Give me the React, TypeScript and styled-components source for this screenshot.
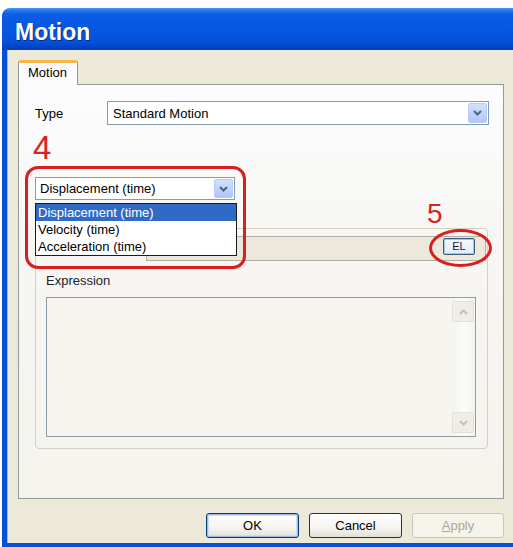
import React from 'react';
import styled, { createGlobalStyle } from 'styled-components';

const GlobalStyle = createGlobalStyle`
  html, body {
    margin: 0;
    padding: 0;
    background: #ffffff;
    overflow: hidden;
  }
  body {
    font-family: "Liberation Sans", Arial, sans-serif;
    font-size: 13px;
    color: #000000;
  }
`;

const Window = styled.div`
  margin: 8px 0 0 2px;
  width: 530px;
  display: flex;
  flex-direction: column;
`;

const TitleBar = styled.div`
  height: 42px;
  box-sizing: border-box;
  padding: 5px 0 0 13px;
  border-radius: 8px 8px 0 0;
  background: linear-gradient(
    180deg,
    #4a95f6 0%,
    #2274ef 7%,
    #0b5de4 15%,
    #0557e2 50%,
    #0452dc 80%,
    #0242c6 94%,
    #0a3aa6 100%
  );
  color: #ffffff;
  font: bold 23px/38px "Liberation Sans", Arial, sans-serif;
  text-shadow: 1px 1px 0 #0a2a8a;
`;

const Body = styled.div`
  background: #ece9d8;
  border-left: 5px solid #0650d8;
  border-bottom: 4px solid #0650d8;
  box-shadow: inset 1px 0 0 #9fb8ec;
  padding: 10px 0 5px 11px;
  display: flex;
  flex-direction: column;
`;

const TabStrip = styled.div`
  display: flex;
  margin-bottom: -1px;
  position: relative;
  z-index: 1;
`;

const Tab = styled.div`
  width: 60px;
  height: 25px;
  box-sizing: border-box;
  padding: 0 0 2px 9px;
  border: 1px solid #919b9c;
  border-top: 3px solid #f7b546;
  border-bottom: none;
  border-radius: 3px 3px 0 0;
  background: #fcfcfe;
  line-height: 20px;
`;

const Panel = styled.div`
  position: relative;
  width: 486px;
  height: 415px;
  box-sizing: border-box;
  border: 1px solid #919b9c;
  background: linear-gradient(180deg, #fcfcfe 0%, #f7f6f2 40%, #f4f3ee 100%);
  padding: 16px 14px 0 16px;
  display: flex;
  flex-direction: column;
`;

const FieldRow = styled.div`
  display: flex;
  align-items: center;
  height: 24px;
`;

const FieldLabel = styled.div`
  width: 72px;
`;

const Combo = styled.div<{ $height: number; $pad: number }>`
  flex: 1;
  height: ${p => p.$height}px;
  box-sizing: border-box;
  border: 1px solid #7f9db9;
  background: #ffffff;
  display: flex;
  align-items: center;
  justify-content: space-between;
  padding-left: ${p => p.$pad}px;
  padding-right: 1px;
`;

const ArrowButton = styled.div<{ $size: number }>`
  width: 19px;
  height: ${p => p.$size}px;
  box-sizing: border-box;
  border: 1px solid #b9cbf3;
  border-radius: 2px;
  background: linear-gradient(180deg, #d3e0fd 0%, #c1d3fb 50%, #b2c7f6 100%);
  display: flex;
  align-items: center;
  justify-content: center;
`;

const Chevron = ({ up = false, color = '#4d6185' }: { up?: boolean; color?: string }) => (
  <svg width="9" height="6" viewBox="0 0 9 6">
    <path
      d={up ? 'M1 5 L4.5 1.5 L8 5' : 'M1 1 L4.5 4.5 L8 1'}
      fill="none"
      stroke={color}
      strokeWidth="2"
    />
  </svg>
);

const ComboWrap = styled.div`
  position: relative;
  width: 200px;
  margin-top: 52px;
  display: flex;
`;

const DropList = styled.div`
  position: absolute;
  top: calc(100% + 3px);
  left: 0;
  width: 202px;
  box-sizing: border-box;
  border: 1px solid #1b1b1b;
  background: #ffffff;
  z-index: 3;
`;

const DropItem = styled.div<{ $selected?: boolean }>`
  height: 17px;
  line-height: 17px;
  padding-left: 2px;
  background: ${p => (p.$selected ? '#316ac5' : 'transparent')};
  color: ${p => (p.$selected ? '#ffffff' : '#000000')};
`;

const GroupBox = styled.div`
  margin-top: 28px;
  width: 453px;
  height: 221px;
  box-sizing: border-box;
  border: 1px solid #d3d0c2;
  border-radius: 4px;
  padding: 7px 1px 0 1px;
  display: flex;
  flex-direction: column;
`;

const LinkBar = styled.div`
  margin-left: 109px;
  height: 25px;
  box-sizing: border-box;
  border: 1px solid #b0aea3;
  background: #ece9dc;
  display: flex;
  justify-content: flex-end;
  align-items: flex-start;
  padding: 1px 10px 0 0;
`;

const SmallButton = styled.div`
  width: 32px;
  height: 17px;
  box-sizing: border-box;
  border: 1px solid #3c5a80;
  border-radius: 2px;
  background: linear-gradient(180deg, #f4f8ff 0%, #e2ebfa 100%);
  box-shadow: inset 0 0 0 1px #a9c3ec;
  font-size: 11px;
  line-height: 15px;
  text-align: center;
  color: #1a1a1a;
`;

const GroupLabel = styled.div`
  margin: 12px 0 0 9px;
  line-height: 16px;
  color: #222222;
`;

const TextArea = styled.div`
  margin: 8px 10px 0 9px;
  height: 140px;
  box-sizing: border-box;
  border: 1px solid #8d9bab;
  background: #f5f4ef;
  display: flex;
`;

const TextContent = styled.div`
  flex: 1;
`;

const ScrollBar = styled.div`
  width: 22px;
  padding: 3px 1px 3px 0;
  display: flex;
  flex-direction: column;
  justify-content: space-between;
  background: linear-gradient(90deg, #f4f3ee 0%, #fbfbf8 50%, #f4f3ee 100%);
`;

const ScrollButton = styled.div`
  height: 21px;
  box-sizing: border-box;
  border: 1px solid #e4e2d8;
  border-radius: 2px;
  background: #eeede6;
  display: flex;
  align-items: center;
  justify-content: center;
`;

const RedFrame = styled.div`
  position: absolute;
  left: 6px;
  top: 81px;
  width: 221px;
  height: 103px;
  box-sizing: border-box;
  border: 3px solid #d81e1e;
  border-radius: 13px;
  z-index: 4;
  pointer-events: none;
`;

const RedEllipse = styled.div`
  position: absolute;
  left: 410px;
  top: 144px;
  width: 63px;
  height: 38px;
  box-sizing: border-box;
  border: 3.5px solid #d81e1e;
  border-radius: 50%;
  z-index: 4;
  pointer-events: none;
`;

const StepNumber = styled.div<{ $x: number; $y: number; $size: number }>`
  position: absolute;
  left: ${p => p.$x}px;
  top: ${p => p.$y}px;
  font-size: ${p => p.$size}px;
  line-height: 1;
  color: #d42424;
  z-index: 4;
`;

const ButtonRow = styled.div`
  width: 486px;
  margin-top: 14px;
  display: flex;
  justify-content: flex-end;
  gap: 10px;
`;

const DialogButton = styled.div<{ $default?: boolean; $disabled?: boolean; $width: number }>`
  width: ${p => p.$width}px;
  height: 25px;
  box-sizing: border-box;
  border: 1px solid ${p => (p.$disabled ? '#c9c7ba' : '#003c74')};
  border-radius: 3px;
  background: ${p =>
    p.$disabled
      ? '#f5f4ea'
      : 'linear-gradient(180deg, #ffffff 0%, #f5f4f0 60%, #e3e0d6 100%)'};
  box-shadow: ${p => (p.$default ? 'inset 0 0 0 1px #9fbaea, inset 0 0 0 2px #cddcf5' : 'none')};
  color: ${p => (p.$disabled ? '#aca899' : '#000000')};
  line-height: 23px;
  text-align: center;
`;

const Mnemonic = styled.span`
  text-decoration: underline;
`;

export default function App() {
  return (
    <>
      <GlobalStyle />
      <Window>
        <TitleBar>Motion</TitleBar>
        <Body>
          <TabStrip>
            <Tab>Motion</Tab>
          </TabStrip>
          <Panel>
            <FieldRow>
              <FieldLabel>Type</FieldLabel>
              <Combo $height={24} $pad={5}>
                <span>Standard Motion</span>
                <ArrowButton $size={20}>
                  <Chevron />
                </ArrowButton>
              </Combo>
            </FieldRow>

            <ComboWrap>
              <Combo $height={23} $pad={4}>
                <span>Displacement (time)</span>
                <ArrowButton $size={19}>
                  <Chevron />
                </ArrowButton>
              </Combo>
              <DropList>
                <DropItem $selected>Displacement (time)</DropItem>
                <DropItem>Velocity (time)</DropItem>
                <DropItem>Acceleration (time)</DropItem>
              </DropList>
            </ComboWrap>

            <GroupBox>
              <LinkBar>
                <SmallButton>EL</SmallButton>
              </LinkBar>
              <GroupLabel>Expression</GroupLabel>
              <TextArea>
                <TextContent />
                <ScrollBar>
                  <ScrollButton>
                    <Chevron up color="#c4c2b6" />
                  </ScrollButton>
                  <ScrollButton>
                    <Chevron color="#c4c2b6" />
                  </ScrollButton>
                </ScrollBar>
              </TextArea>
            </GroupBox>

            <StepNumber $x={14} $y={46} $size={33}>4</StepNumber>
            <RedFrame />
            <StepNumber $x={408} $y={115} $size={28}>5</StepNumber>
            <RedEllipse />
          </Panel>
          <ButtonRow>
            <DialogButton $default $width={93}>OK</DialogButton>
            <DialogButton $width={93}>Cancel</DialogButton>
            <DialogButton $disabled $width={92}>
              <Mnemonic>A</Mnemonic>pply
            </DialogButton>
          </ButtonRow>
        </Body>
      </Window>
    </>
  );
}
